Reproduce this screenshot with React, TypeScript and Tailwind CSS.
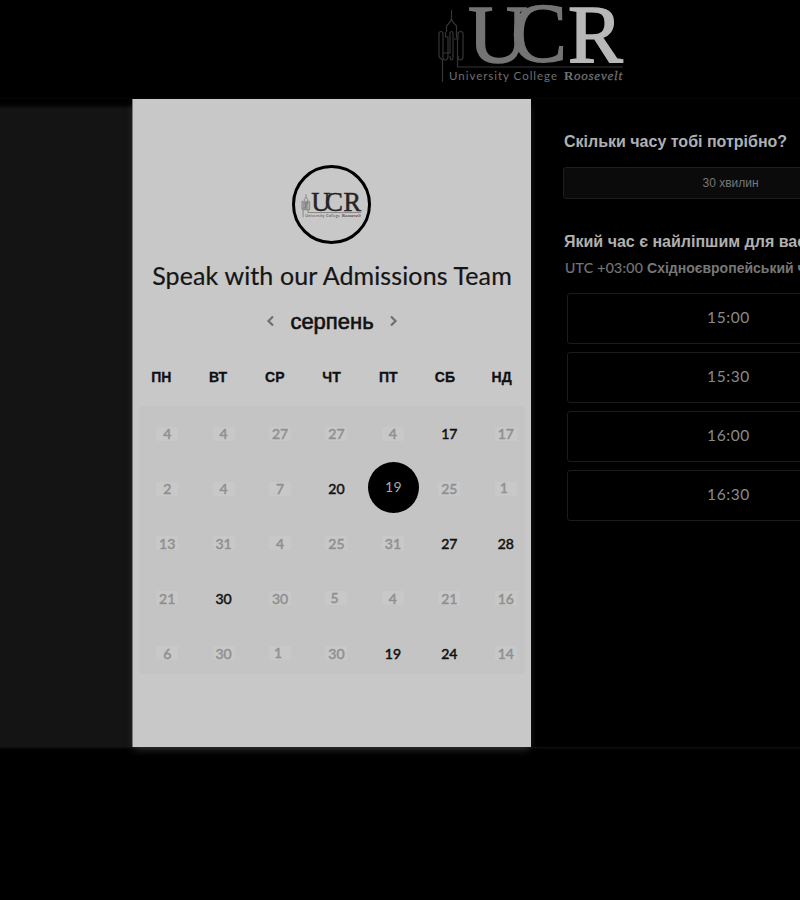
import React from 'react';

const weekdays = ['ПН', 'ВТ', 'СР', 'ЧТ', 'ПТ', 'СБ', 'НД'];

type Day = { n: number; on?: boolean; picked?: boolean; nudge?: boolean };

const days: Day[] = [
  { n: 4 }, { n: 4 }, { n: 27 }, { n: 27 }, { n: 4 }, { n: 17, on: true }, { n: 17 },
  { n: 2 }, { n: 4 }, { n: 7 }, { n: 20, on: true }, { n: 19, picked: true }, { n: 25 }, { n: 1, nudge: true },
  { n: 13 }, { n: 31 }, { n: 4 }, { n: 25 }, { n: 31 }, { n: 27, on: true }, { n: 28, on: true },
  { n: 21 }, { n: 30, on: true }, { n: 30 }, { n: 5, nudge: true }, { n: 4 }, { n: 21 }, { n: 16 },
  { n: 6 }, { n: 30 }, { n: 1, nudge: true }, { n: 30 }, { n: 19, on: true }, { n: 24, on: true }, { n: 14 },
];

const times = ['15:00', '15:30', '16:00', '16:30'];

function Logo({ dark = false, className }: { dark?: boolean; className: string }) {
  const main = dark ? '#252525' : '#747474';
  const bright = dark ? '#252525' : '#b8b8b8';
  const line = dark ? '#666' : '#353535';
  const small = dark ? '#444' : '#707070';
  return (
    <svg viewBox="0 0 190 84" className={className} aria-label="University College Roosevelt">
      <g fill="none" stroke={line} strokeWidth={dark ? 2 : 1.2}>
        <path d="M15.500 10V19L14 22L10.500 26V32M15.500 19L17 22L20.500 26V32M6.500 82V60L3 57V34Q3 31.500 5 31.500Q7 31.500 7 34V53H14V34Q14 31.500 15.500 31.500Q17 31.500 17 34V57Q17 60 15.500 60Q14 60 14 56M7 53V57Q7 60 9 60Q12 60 12 56V37H9.500V32M20.500 32V38M21.500 39V67H187M18 39H22V34Q22 31.500 25 31.500Q27 31.500 27 34V57Q27 60 24 60Q22 60 22 56" />
      </g>
      <g fontFamily="'Liberation Serif', serif">
        <text x="32" y="62" fontSize="83" fill={main} stroke={main} strokeWidth="1.4">U</text>
        <text x="75" y="62" fontSize="84" fill={main} stroke={main} strokeWidth="1.4">C</text>
        <text x="132" y="62" fontSize="82" fill={bright} stroke={bright} strokeWidth="1.6">R</text>
      </g>
      <text x="13" y="80" fill={small} fontFamily="Lato, sans-serif" fontSize="11.500" textLength="108">University College</text>
      <text x="128" y="80" fill={small} fontFamily="'Liberation Serif', serif" fontWeight="bold" fontSize="13">R</text>
      <text x="138" y="80" fill={small} fontFamily="'Liberation Serif', serif" fontStyle="italic" fontSize="13" stroke={small} strokeWidth=".3" textLength="48">oosevelt</text>
    </svg>
  );
}

function Chevron({ flip = false }: { flip?: boolean }) {
  return (
    <svg viewBox="0 0 8 12" className="-mt-0.5 h-3 w-2" fill="none" stroke="#707070" strokeWidth="2.2">
      <path d={flip ? 'M1 1.500L5.500 6L1 10.500' : 'M7 1.500L2.500 6L7 10.500'} />
    </svg>
  );
}

function DayCell({ day }: { day: Day }) {
  if (day.picked) {
    return (
      <div className="flex items-center justify-center">
        <span className="-mt-px ml-px flex size-[51px] shrink-0 items-center justify-center rounded-full bg-black pb-0.5 text-[14px] tracking-[0.3px] text-[#aaa]">{day.n}</span>
      </div>
    );
  }
  return (
    <div className="flex items-center justify-center pt-px">
      <span
        className={`flex h-[14px] min-w-[22px] items-center justify-center text-[14px] ${day.on ? 'text-[#111] [-webkit-text-stroke:0.5px_#111]' : 'bg-[#c8c8c8] text-[#909090] [-webkit-text-stroke:0.5px_#909090]'}`}
      >
        <span className={day.nudge ? '-translate-x-[2px] -translate-y-px' : ''}>{day.n}</span>
      </span>
    </div>
  );
}

export default function App() {
  return (
    <div className="h-[900px] w-[800px] overflow-hidden bg-black font-[Lato,'Liberation_Sans',sans-serif]">
      <header className="flex h-[99px] border-b border-[#060606] pl-[436px]">
        <Logo className="h-[84px] w-[190px] shrink-0" />
      </header>

      <main className="flex h-[648px]">
        <aside className="w-[132px] shrink-0 bg-linear-to-b from-black to-[#141414] to-[10px]" />

        <section className="flex w-[399px] shrink-0 flex-col border-l border-[#777] bg-[#c8c8c8] shadow-[0_4px_8px_-2px_#333]">
          <div className="mt-[66px] ml-[159px] flex size-[79px] items-center justify-center rounded-full border-[3px] border-black">
            <Logo dark className="h-[27px] w-[61px]" />
          </div>
          <h1 className="mt-[13px] h-[36px] text-center text-[25px] leading-[36px] tracking-[0.12px] whitespace-nowrap text-[#151515] [-webkit-text-stroke:0.2px_#151515]">
            Speak with our Admissions Team
          </h1>
          <div className="mt-[14px] flex h-[30px] items-center justify-center gap-4">
            <Chevron />
            <span className="font-['Liberation_Sans',sans-serif] text-[22px] leading-[30px] text-[#111] [-webkit-text-stroke:0.6px_#111]">серпень</span>
            <Chevron flip />
          </div>
          <div className="mt-[30px] grid h-[20px] w-[397px] grid-cols-7 items-center text-center font-['Liberation_Sans',sans-serif] text-[14px] font-bold text-[#111] [-webkit-text-stroke:0.3px_#111]">
            {weekdays.map((d) => <span key={d}>{d}</span>)}
          </div>
          <div className="mt-[19px] ml-[6px] h-[268px] w-[386px] bg-[#c4c4c4]">
            <div className="grid h-[274px] w-[395px] grid-cols-7 grid-rows-5">
              {days.map((day, i) => <DayCell key={i} day={day} />)}
            </div>
          </div>
        </section>

        <section className="w-[269px] overflow-hidden pl-8">
          <h2 className="mt-[33px] ml-px h-[20px] font-['Liberation_Sans',sans-serif] text-[16px] leading-[20px] font-bold whitespace-nowrap text-[#b0b0b0]">
            Скільки часу тобі потрібно?
          </h2>
          <button className="mt-[15px] flex h-[32px] w-[335px] items-center justify-center rounded-[3px] border border-[#1e1e1e] bg-[#0b0b0b] font-['Liberation_Sans',sans-serif] text-[12px] text-[#777]">
            30 хвилин
          </button>
          <h2 className="mt-[33px] ml-px h-[20px] font-['Liberation_Sans',sans-serif] text-[16px] leading-[20px] font-bold whitespace-nowrap text-[#b0b0b0]">
            Який час є найліпшим для вас?
          </h2>
          <p className="mt-[6px] ml-0.5 h-[20px] text-[14px] leading-[20px] whitespace-nowrap text-[#777]">
            <span className="tracking-[0.3px] [-webkit-text-stroke:0.2px_#777]">UTC +03:00 </span>
            <span className="font-['Liberation_Sans',sans-serif] font-bold">Східноєвропейський час</span>
          </p>
          <div className="mt-[15px] ml-1 flex w-[323px] flex-col gap-2">
            {times.map((t) => (
              <button key={t} className="flex h-[51px] items-center justify-center rounded-[3px] border border-[#1b1b1b] pb-[2px] text-[15.500px] tracking-[0.600px] text-[#8a8a8a]">
                {t}
              </button>
            ))}
          </div>
        </section>
      </main>

      <footer className="h-[153px] bg-linear-to-b from-[#121212] to-black to-[5px]" />
    </div>
  );
}
